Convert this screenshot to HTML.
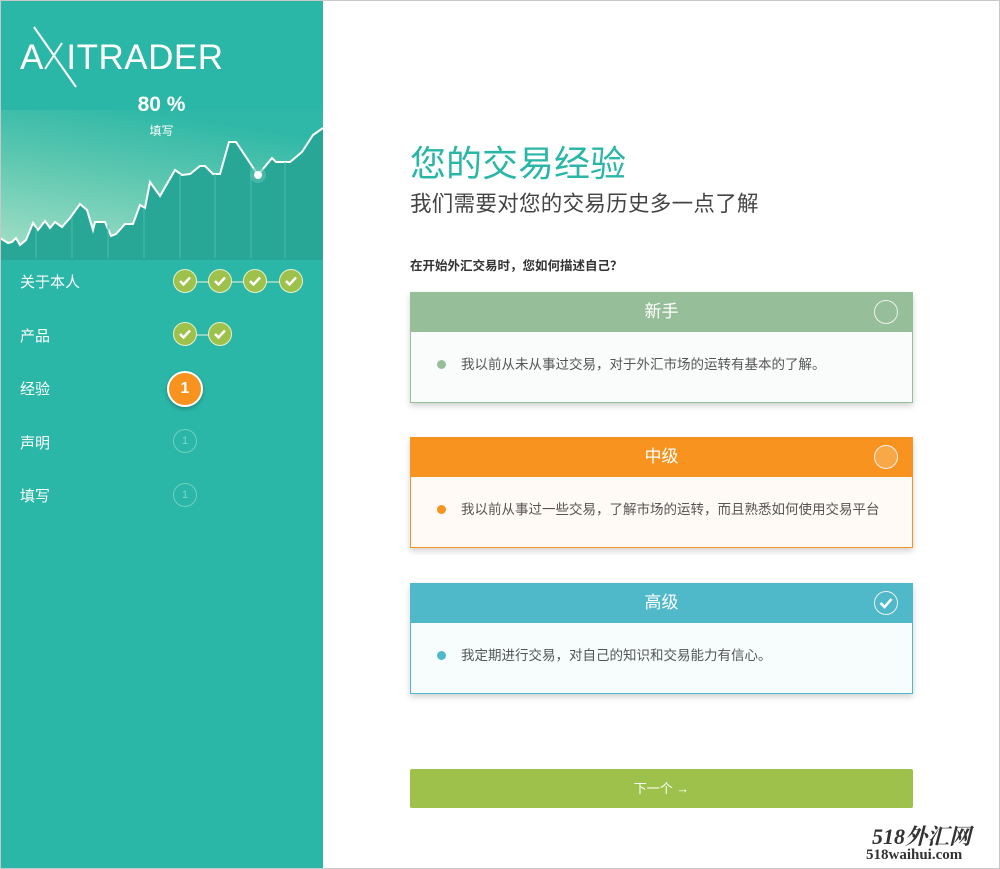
<!DOCTYPE html>
<html><head><meta charset="utf-8"><style>
*{margin:0;padding:0;box-sizing:border-box}
body{width:1000px;height:869px;background:#fff;font-family:"Liberation Sans","Noto Sans CJK SC",sans-serif;position:relative;overflow:hidden}
.frame{position:absolute;left:0;top:0;width:1000px;height:869px;border:1px solid #c8c8c8;pointer-events:none;z-index:9}
.side{position:absolute;left:0;top:0;width:323px;height:869px;background:#2bb7a7}
.logo{position:absolute;left:20px;top:38px;color:#fff;font-size:35px;letter-spacing:0.5px;font-family:"Liberation Sans",sans-serif}
.pct{position:absolute;left:0;width:323px;text-align:center;color:#fff}
.nav{position:absolute;left:20px;color:#fff;font-size:15px}
.ck{position:absolute;width:24px;height:24px;border-radius:50%;background:#9dc14a;border:1.5px solid #e8f0d0}
.ck svg{position:absolute;left:3px;top:3px}
.ln{position:absolute;height:2px;background:#8fd3c5}
.num{position:absolute;width:24px;height:24px;border-radius:50%;border:1px solid #6fd0c3;color:#7fd6ca;font-size:11px;text-align:center;line-height:22px}
.card{position:absolute;left:410px;width:503px;height:111px;box-shadow:0 3px 6px rgba(0,0,0,.18)}
.hd{height:40px;color:#fff;font-size:17px;text-align:center;line-height:40px;position:relative}
.bd{height:71px;border:1px solid;border-top:none;position:relative;font-size:13.5px;color:#555}
.bd span{position:absolute;left:50px;top:21px}
.bd i{position:absolute;left:26px;top:28px;width:9px;height:9px;border-radius:50%}
.rc{position:absolute;right:15px;top:8px;width:24px;height:24px;border-radius:50%;border:1.5px solid #f0f0f0}
</style></head><body>
<div class="side">
<svg style="position:absolute;left:0;top:0" width="323" height="260">
<defs><linearGradient id="g" x1="0.1" y1="1" x2="0.45" y2="0"><stop offset="0" stop-color="#a5e0c6"/><stop offset="0.6" stop-color="#5cc7b0"/><stop offset="1" stop-color="#2fb8a7"/></linearGradient></defs>
<rect x="0" y="110" width="323" height="150" fill="url(#g)"/>
<polygon fill="#28a797" points="0,238 8,243 12,242 16,238 20,245 26,240 33,223 38,230 45,221 50,228 55,222 62,227 70,218 80,204 87,210 93,230 95,222 105,222 111,236 116,234 125,224 133,224 140,205 145,208 150,182 160,196 175,170 182,175 190,174 200,166 205,166 213,174 220,174 229,142 236,142 258,175 272,158 276,162 290,162 302,152 313,135 323,128 323,260 0,260"/>
<polyline fill="none" stroke="#fff" stroke-width="2" points="0,238 8,243 12,242 16,238 20,245 26,240 33,223 38,230 45,221 50,228 55,222 62,227 70,218 80,204 87,210 93,230 95,222 105,222 111,236 116,234 125,224 133,224 140,205 145,208 150,182 160,196 175,170 182,175 190,174 200,166 205,166 213,174 220,174 229,142 236,142 258,175 272,158 276,162 290,162 302,152 313,135 323,128"/>
<g stroke="#4bbcab" stroke-width="1"><line x1="36" y1="228" x2="36" y2="258"/><line x1="72" y1="218" x2="72" y2="258"/><line x1="108" y1="225" x2="108" y2="258"/><line x1="144" y1="208" x2="144" y2="258"/><line x1="180" y1="174" x2="180" y2="258"/><line x1="215" y1="174" x2="215" y2="258"/><line x1="251" y1="166" x2="251" y2="258"/><line x1="285" y1="162" x2="285" y2="258"/></g>
<circle cx="258" cy="175" r="8" fill="#5ec3b1" opacity=".6"/><circle cx="258" cy="175" r="4" fill="#fff"/>
<line x1="34" y1="27" x2="76" y2="87" stroke="#fff" stroke-width="2"/>
<line x1="62" y1="43" x2="45" y2="69" stroke="#fff" stroke-width="2"/>
</svg>
<div class="logo">A&thinsp;&thinsp;&thinsp;ITRADER</div>
<div class="pct" style="top:93px;font-size:21px;font-weight:bold">80 %</div>
<div class="pct" style="top:122px;font-size:12px">填写</div>
<div class="nav" style="top:271px">关于本人</div>
<div class="nav" style="top:325px">产品</div>
<div class="nav" style="top:378px">经验</div>
<div class="nav" style="top:432px">声明</div>
<div class="nav" style="top:485px">填写</div>
<div class="ln" style="left:185px;top:281px;width:105px"></div>
<div class="ln" style="left:185px;top:334px;width:35px"></div>
<div class="ck" style="left:173px;top:269px"><svg width="16" height="16"><path d="M3 8l3.5 3.5L13 4.5" stroke="#fff" stroke-width="2.5" fill="none"/></svg></div>
<div class="ck" style="left:208px;top:269px"><svg width="16" height="16"><path d="M3 8l3.5 3.5L13 4.5" stroke="#fff" stroke-width="2.5" fill="none"/></svg></div>
<div class="ck" style="left:243px;top:269px"><svg width="16" height="16"><path d="M3 8l3.5 3.5L13 4.5" stroke="#fff" stroke-width="2.5" fill="none"/></svg></div>
<div class="ck" style="left:279px;top:269px"><svg width="16" height="16"><path d="M3 8l3.5 3.5L13 4.5" stroke="#fff" stroke-width="2.5" fill="none"/></svg></div>
<div class="ck" style="left:173px;top:322px"><svg width="16" height="16"><path d="M3 8l3.5 3.5L13 4.5" stroke="#fff" stroke-width="2.5" fill="none"/></svg></div>
<div class="ck" style="left:208px;top:322px"><svg width="16" height="16"><path d="M3 8l3.5 3.5L13 4.5" stroke="#fff" stroke-width="2.5" fill="none"/></svg></div>
<div style="position:absolute;left:167px;top:371px;width:36px;height:36px;border-radius:50%;background:#f7931e;border:2px solid #fff;color:#fff;font-weight:bold;font-size:16px;text-align:center;line-height:32px;box-shadow:0 2px 4px rgba(0,0,0,.25)">1</div>
<div class="num" style="left:173px;top:429px">1</div>
<div class="num" style="left:173px;top:483px">1</div>
</div>
<div style="position:absolute;left:410px;top:135px;font-size:36px;color:#2bb7a7">您的交易经验</div>
<div style="position:absolute;left:410px;top:187px;font-size:21.5px;color:#444;letter-spacing:0.3px">我们需要对您的交易历史多一点了解</div>
<div style="position:absolute;left:410px;top:255px;font-size:12.5px;font-weight:bold;color:#333">在开始外汇交易时，您如何描述自己？</div>
<div class="card" style="top:292px"><div class="hd" style="background:#96be98">新手<div class="rc"></div></div><div class="bd" style="border-color:#96be98;background:#fafcfb"><i style="background:#96be98"></i><span>我以前从未从事过交易，对于外汇市场的运转有基本的了解。</span></div></div>
<div class="card" style="top:437px"><div class="hd" style="background:#f7931e">中级<div class="rc" style="background:#f9a848"></div></div><div class="bd" style="border-color:#f7931e;background:#fffaf5"><i style="background:#f7931e"></i><span>我以前从事过一些交易，了解市场的运转，而且熟悉如何使用交易平台</span></div></div>
<div class="card" style="top:583px"><div class="hd" style="background:#4fb9ca">高级<div class="rc"><svg width="22" height="22" style="position:absolute;left:0;top:0"><path d="M5.5 11l4 4 7-8" stroke="#fff" stroke-width="2.5" fill="none"/></svg></div></div><div class="bd" style="border-color:#4fb9ca;background:#f7fdfd"><i style="background:#4fb9ca"></i><span>我定期进行交易，对自己的知识和交易能力有信心。</span></div></div>
<div style="position:absolute;left:410px;top:769px;width:503px;height:39px;background:#9dc14a;border-radius:2px;color:#fff;font-size:13px;text-align:center;line-height:39px">下一个 →</div>
<div style="position:absolute;left:872px;top:820px;font-size:22px;font-style:italic;font-weight:bold;color:#333;font-family:'Liberation Serif','Noto Serif CJK SC',serif">518外汇网</div>
<div style="position:absolute;left:866px;top:847px;font-size:15px;font-weight:bold;color:#333;font-family:'Liberation Serif',serif">518waihui.com</div>
<div class="frame"></div>
</body></html>
